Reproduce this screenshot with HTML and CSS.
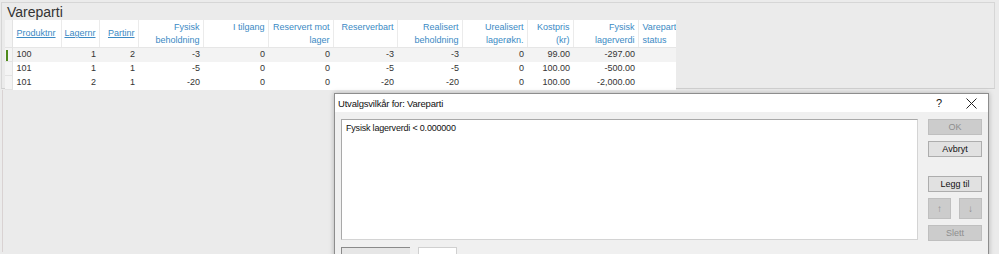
FILE: index.html
```html
<!DOCTYPE html>
<html lang="no">

<head>
  <meta charset="UTF-8">
  <title>Vareparti</title>
  <link rel="stylesheet" href="styles.css">
</head>

<body>
  <div class="panel">
    <div class="panel-ttl">Vareparti</div>
    <table class="grid">
      <colgroup>
        <col style="width:7px">
        <col style="width:49px">
        <col style="width:38px">
        <col style="width:39px">
        <col style="width:65px">
        <col style="width:65px">
        <col style="width:65px">
        <col style="width:64px">
        <col style="width:65px">
        <col style="width:65px">
        <col style="width:46px">
        <col style="width:65px">
        <col style="width:38px">
      </colgroup>
      <thead>
        <tr>
          <th class="ind"></th>
          <th class="left"><a href="#">Produktnr</a></th>
          <th><a href="#">Lagernr</a></th>
          <th><a href="#">Partinr</a></th>
          <th>Fysisk<br>beholdning</th>
          <th>I tilgang<br>&nbsp;</th>
          <th>Reservert mot<br>lager</th>
          <th>Reserverbart<br>&nbsp;</th>
          <th>Realisert<br>beholdning</th>
          <th>Urealisert<br>lagerøkn.</th>
          <th>Kostpris<br>(kr)</th>
          <th>Fysisk<br>lagerverdi</th>
          <th class="left">Varepart<br>status</th>
        </tr>
      </thead>
      <tbody>
        <tr class="is-current">
          <td class="ind"><span class="mark"></span></td>
          <td class="left">100</td><td>1</td><td>2</td><td>-3</td><td>0</td><td>0</td>
          <td>-3</td><td>-3</td><td>0</td><td>99.00</td><td>-297.00</td><td></td>
        </tr>
        <tr>
          <td class="ind"></td>
          <td class="left">101</td><td>1</td><td>1</td><td>-5</td><td>0</td><td>0</td>
          <td>-5</td><td>-5</td><td>0</td><td>100.00</td><td>-500.00</td><td></td>
        </tr>
        <tr>
          <td class="ind"></td>
          <td class="left">101</td><td>2</td><td>1</td><td>-20</td><td>0</td><td>0</td>
          <td>-20</td><td>-20</td><td>0</td><td>100.00</td><td>-2,000.00</td><td></td>
        </tr>
      </tbody>
    </table>
  </div>

  <div class="lower"></div>

  <!-- dialog -->
  <div class="dlg">
    <div class="dlg-bar">
      <span class="dlg-ttl">Utvalgsvilkår for: Vareparti</span>
      <span class="dlg-help">?</span>
      <span class="dlg-close">
        <svg width="11" height="11" viewBox="0 0 11 11"><path d="M0.5 0.5 L10.5 10.5 M10.5 0.5 L0.5 10.5" stroke="#222" stroke-width="1" fill="none"/></svg>
      </span>
    </div>
    <div class="dlg-body">
      <div class="dlg-main">
        <div class="cond-list">Fysisk lagerverdi &lt; 0.000000</div>
        <div class="dlg-foot">
          <span class="foot-a"></span>
          <span class="foot-b"></span>
        </div>
      </div>
      <div class="dlg-side">
        <button class="wbtn" disabled>OK</button>
        <button class="wbtn">Avbryt</button>
        <button class="wbtn gap">Legg til</button>
        <div class="arrows">
          <button class="wbtn sq" disabled>&#8593;</button>
          <button class="wbtn sq" disabled>&#8595;</button>
        </div>
        <button class="wbtn" disabled>Slett</button>
      </div>
    </div>
  </div>
</body>

</html>
```

FILE: styles.css
```css
html,
body {
  margin: 0;
  padding: 0;
}

body {
  width: 999px;
  height: 254px;
  background: #ebebeb;
  font-family: "Liberation Sans", Arial, sans-serif;
  color: #333;
  position: relative;
  overflow: hidden;
}

.panel {
  margin: 2px 4px 0 1px;
  height: 85px;
  border: 1px solid #d6d6d6;
  border-bottom-color: #cfcfcf;
  background: #ebebeb;
}

.panel-ttl {
  font-size: 14px;
  line-height: 16px;
  padding: 1px 0 0 5px;
  color: #333;
}

.grid {
  margin-left: 3px;
  border-collapse: collapse;
  table-layout: fixed;
  width: 671px;
  background: #fff;
  font-size: 9px;
}

.grid th,
.grid td {
  padding: 0 3px 0 2px;
  text-align: right;
  white-space: nowrap;
  overflow: hidden;
}

.grid th {
  height: 27px;
  font-weight: normal;
  color: #3b8ac4;
  line-height: 13px;
  vertical-align: middle;
  border-left: 1px solid #ebebeb;
  border-bottom: 1px solid #e6e6e6;
}

.grid th a {
  color: #3b8ac4;
}

.grid td {
  height: 13px;
  line-height: 13px;
  color: #333;
}

.grid .left {
  text-align: left;
  padding-left: 4px;
}

.grid .ind {
  padding: 0;
  background: #f4f4f4;
  border-right: 1px solid #e3e3e3;
  border-left: none;
  border-bottom: 1px solid #e3e3e3;
  position: relative;
}

.is-current td {
  background: #f3f3f3;
}

.mark {
  display: block;
  width: 2px;
  height: 11px;
  margin: 1px 0 0 1px;
  background: #4f8a1b;
}

.lower {
  position: absolute;
  left: 2px;
  top: 90px;
  width: 1px;
  height: 162px;
  background: #d9d2d2;
}

/* dialog */
.dlg {
  position: absolute;
  left: 334px;
  top: 93px;
  width: 653px;
  height: 170px;
  background: #f0f0f0;
  border: 1px solid #8d8d8d;
  box-shadow: 0 0 5px rgba(0, 0, 0, 0.25);
  font-family: "Liberation Sans", Arial, sans-serif;
  font-size: 9px;
  color: #111;
}

.dlg-bar {
  height: 18px;
  background: #fff;
  display: flex;
  align-items: center;
  padding-left: 3px;
}

.dlg-ttl {
  flex: 1;
  font-size: 9.5px;
  letter-spacing: -0.2px;
}

.dlg-help {
  width: 30px;
  font-size: 11px;
  text-align: center;
}

.dlg-close {
  width: 34px;
  display: flex;
  justify-content: center;
}

.dlg-body {
  display: flex;
  padding: 7px 6px 0 6px;
  gap: 10px;
}

.dlg-main {
  width: 577px;
}

.cond-list {
  height: 113px;
  background: #fff;
  border: 1px solid #a9a9a9;
  border-right-color: #d4d4d4;
  border-bottom-color: #d4d4d4;
  padding: 3px 4px;
  letter-spacing: -0.2px;
}

.dlg-foot {
  display: flex;
  gap: 8px;
  padding-top: 7px;
}

.foot-a {
  width: 68px;
  height: 8px;
  border-top: 1px solid #8a8a8a;
  border-left: 1px solid #8a8a8a;
  background: #e6e6e6;
}

.foot-b {
  width: 37px;
  height: 8px;
  background: #fff;
  border: 1px solid #d0d0d0;
}

.dlg-side {
  width: 54px;
  display: flex;
  flex-direction: column;
}

.wbtn {
  display: block;
  width: 54px;
  height: 16px;
  padding: 0;
  margin: 0 0 6px;
  font-family: inherit;
  font-size: 9px;
  color: #111;
  background: #e1e1e1;
  border: 1px solid #adadad;
}

.wbtn[disabled] {
  background: #cccccc;
  border-color: #bfbfbf;
  color: #8e8e8e;
}

.wbtn.gap {
  margin-top: 13px;
}

.arrows {
  display: flex;
  justify-content: space-between;
  margin-bottom: 6px;
}

.wbtn.sq {
  width: 23px;
  height: 21px;
  margin: 0;
  font-size: 10px;
}
```
